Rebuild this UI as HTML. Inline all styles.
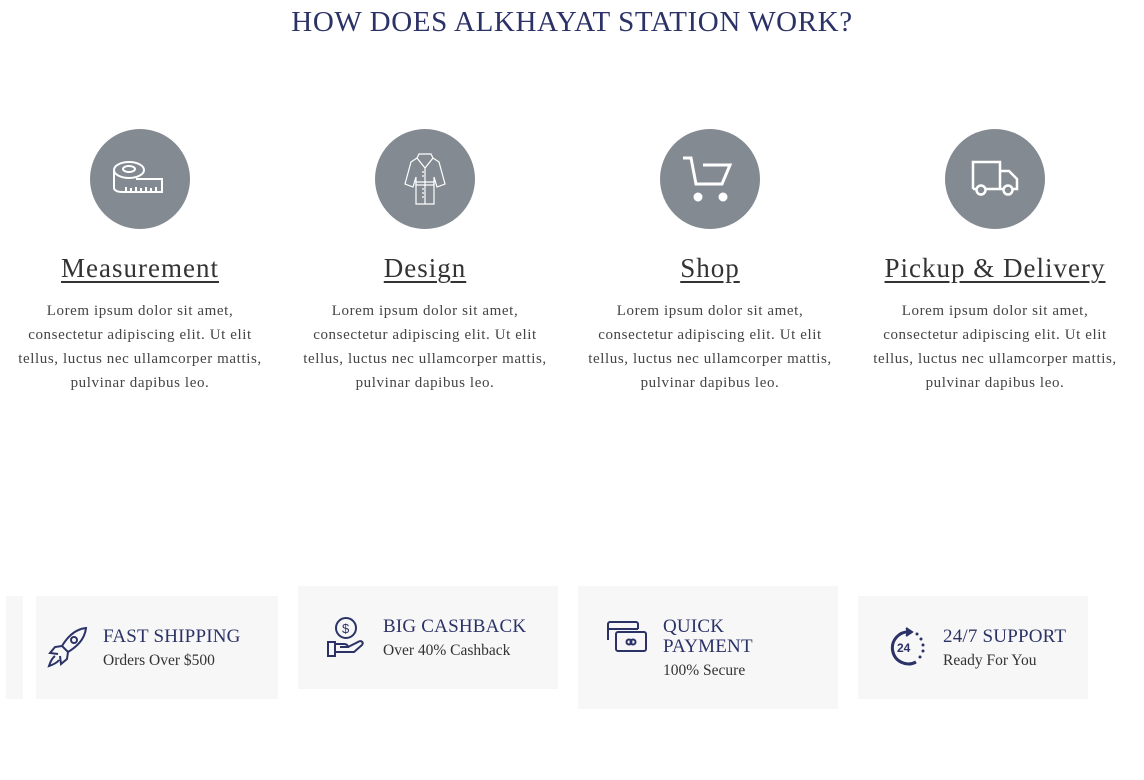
<!DOCTYPE html>
<html><head><meta charset="utf-8"><style>
*{margin:0;padding:0;box-sizing:border-box}
body{width:1144px;height:780px;background:#fff;position:relative;overflow:hidden;font-family:"Liberation Serif",serif}
h1{position:absolute;top:6px;left:0;width:1144px;text-align:center;font-weight:400;font-size:29px;color:#2b3266;letter-spacing:0.6px}
.col{position:absolute;top:129px;width:270px;text-align:center}
.circ{width:100px;height:100px;border-radius:50%;background:#838a91;margin:0 auto;display:flex;align-items:center;justify-content:center}
.col h2{margin-top:22px;font-size:27px;font-weight:400;color:#333;text-decoration:underline;text-decoration-thickness:2px;text-underline-offset:4px;line-height:34px;letter-spacing:1px;white-space:nowrap}
.col p{margin-top:14px;font-size:15px;line-height:24px;color:#444;letter-spacing:0.6px;white-space:nowrap}
.box{position:absolute;background:#f7f7f7}
.box svg{position:absolute}
.t{position:absolute;color:#2b3266;font-size:19px;line-height:20px;letter-spacing:0.2px}
.s{position:absolute;color:#333;font-size:15.5px}
</style></head><body>
<h1>HOW DOES ALKHAYAT STATION WORK?</h1>

<div class="col" style="left:5px"><div class="circ"><svg width="56" height="40" viewBox="0 0 56 40" fill="none" stroke="#fff" stroke-width="2"><ellipse cx="17" cy="11" rx="15" ry="8"/><ellipse cx="17" cy="10" rx="6" ry="3"/><path d="M2 11v18c0 2 3 4 8 4h40V20H24"/><path d="M14 33v-5M19 33v-4M24 33v-5M29 33v-4M34 33v-5M39 33v-4M44 33v-5"/></svg></div><h2>Measurement</h2><p>Lorem ipsum dolor sit amet,<br>consectetur adipiscing elit. Ut elit<br>tellus, luctus nec ullamcorper mattis,<br>pulvinar dapibus leo.</p></div>

<div class="col" style="left:290px"><div class="circ"><svg width="50" height="54" viewBox="0 0 50 54" fill="none" stroke="#fff" stroke-width="1.2"><path d="M19 2h12l2 4-8 10-8-10z"/><path d="M17 6l-6 4-6 22 8 3 3-10v27h18V25l3 10 8-3-6-22-6-4"/><path d="M25 16v36M16 30h18v3H16z"/><path d="M22 20h2M22 24h2M22 37h2M22 41h2M22 45h2"/></svg></div><h2>Design</h2><p>Lorem ipsum dolor sit amet,<br>consectetur adipiscing elit. Ut elit<br>tellus, luctus nec ullamcorper mattis,<br>pulvinar dapibus leo.</p></div>

<div class="col" style="left:575px"><div class="circ"><svg width="54" height="48" viewBox="0 0 54 48" fill="none" stroke="#fff" stroke-width="3"><path d="M0 3h8l5 26h26l8-19H20"/><circle cx="15" cy="42" r="3" fill="#fff"/><circle cx="40" cy="42" r="3" fill="#fff"/></svg></div><h2>Shop</h2><p>Lorem ipsum dolor sit amet,<br>consectetur adipiscing elit. Ut elit<br>tellus, luctus nec ullamcorper mattis,<br>pulvinar dapibus leo.</p></div>

<div class="col" style="left:860px"><div class="circ"><svg width="50" height="40" viewBox="0 0 50 40" fill="none" stroke="#fff" stroke-width="2.5"><path d="M3 30V3h27v27M30 12h9l8 8v10h-4M16 30h18M3 30h3"/><circle cx="11" cy="31" r="4.5"/><circle cx="38" cy="31" r="4.5"/></svg></div><h2>Pickup &amp; Delivery</h2><p>Lorem ipsum dolor sit amet,<br>consectetur adipiscing elit. Ut elit<br>tellus, luctus nec ullamcorper mattis,<br>pulvinar dapibus leo.</p></div>

<div class="box" style="left:6px;top:596px;width:17px;height:103px"></div>
<div class="box" style="left:36px;top:596px;width:242px;height:103px">
<svg style="left:10px;top:30px" width="44" height="42" viewBox="0 0 44 42" fill="none" stroke="#2b3266" stroke-width="2"><path d="M40 2c-10 1-18 8-24 18l6 6c10-6 17-14 18-24z"/><circle cx="28" cy="14" r="3"/><path d="M16 20l-7 1-5 6 8 1M22 26l-1 7-6 5-1-8M9 30c-3 2-5 7-6 10 3-1 8-3 10-6"/></svg>
<div class="t" style="left:67px;top:31px">FAST SHIPPING</div><div class="s" style="left:67px;top:56px">Orders Over $500</div></div>
<div class="box" style="left:298px;top:586px;width:260px;height:103px">
<svg style="left:28px;top:30px" width="44" height="42" viewBox="0 0 44 42" fill="none" stroke="#2b3266" stroke-width="2"><circle cx="20" cy="12" r="10"/><text x="16" y="17" font-size="13" fill="#2b3266" stroke="none" font-family="Liberation Sans">$</text><path d="M2 26h7v14H2zM9 28h9c3 0 4 2 4 3h-8M22 31l10-5c3-2 6 0 4 3l-8 7H9"/></svg>
<div class="t" style="left:85px;top:31px">BIG CASHBACK</div><div class="s" style="left:85px;top:56px">Over 40% Cashback</div></div>
<div class="box" style="left:578px;top:586px;width:260px;height:123px">
<svg style="left:28px;top:34px" width="44" height="34" viewBox="0 0 44 34" fill="none" stroke="#2b3266" stroke-width="2"><path d="M2 20V4c0-1 1-2 2-2h26c1 0 2 1 2 2v5M2 9h30"/><rect x="10" y="12" width="30" height="19" rx="2"/><circle cx="23" cy="22" r="2.5"/><circle cx="27" cy="22" r="2.5"/></svg>
<div class="t" style="left:85px;top:31px;line-height:20px">QUICK<br>PAYMENT</div><div class="s" style="left:85px;top:76px">100% Secure</div></div>
<div class="box" style="left:858px;top:596px;width:230px;height:103px">
<svg style="left:30px;top:30px" width="40" height="42" viewBox="0 0 40 42" fill="none" stroke="#2b3266" stroke-width="3"><path d="M22 6A16 16 0 1 0 28 36"/><path d="M18 2l6 4-6 4" stroke-width="2" fill="#2b3266"/><text x="9" y="26" font-size="12" font-weight="bold" fill="#2b3266" stroke="none" font-family="Liberation Sans">24</text><g fill="#2b3266" stroke="none"><circle cx="29" cy="8" r="1.5"/><circle cx="33" cy="13" r="1.5"/><circle cx="35" cy="19" r="1.5"/><circle cx="35" cy="25" r="1.5"/><circle cx="32" cy="31" r="1.5"/></g></svg>
<div class="t" style="left:85px;top:31px">24/7 SUPPORT</div><div class="s" style="left:85px;top:56px">Ready For You</div></div>
</body></html>
